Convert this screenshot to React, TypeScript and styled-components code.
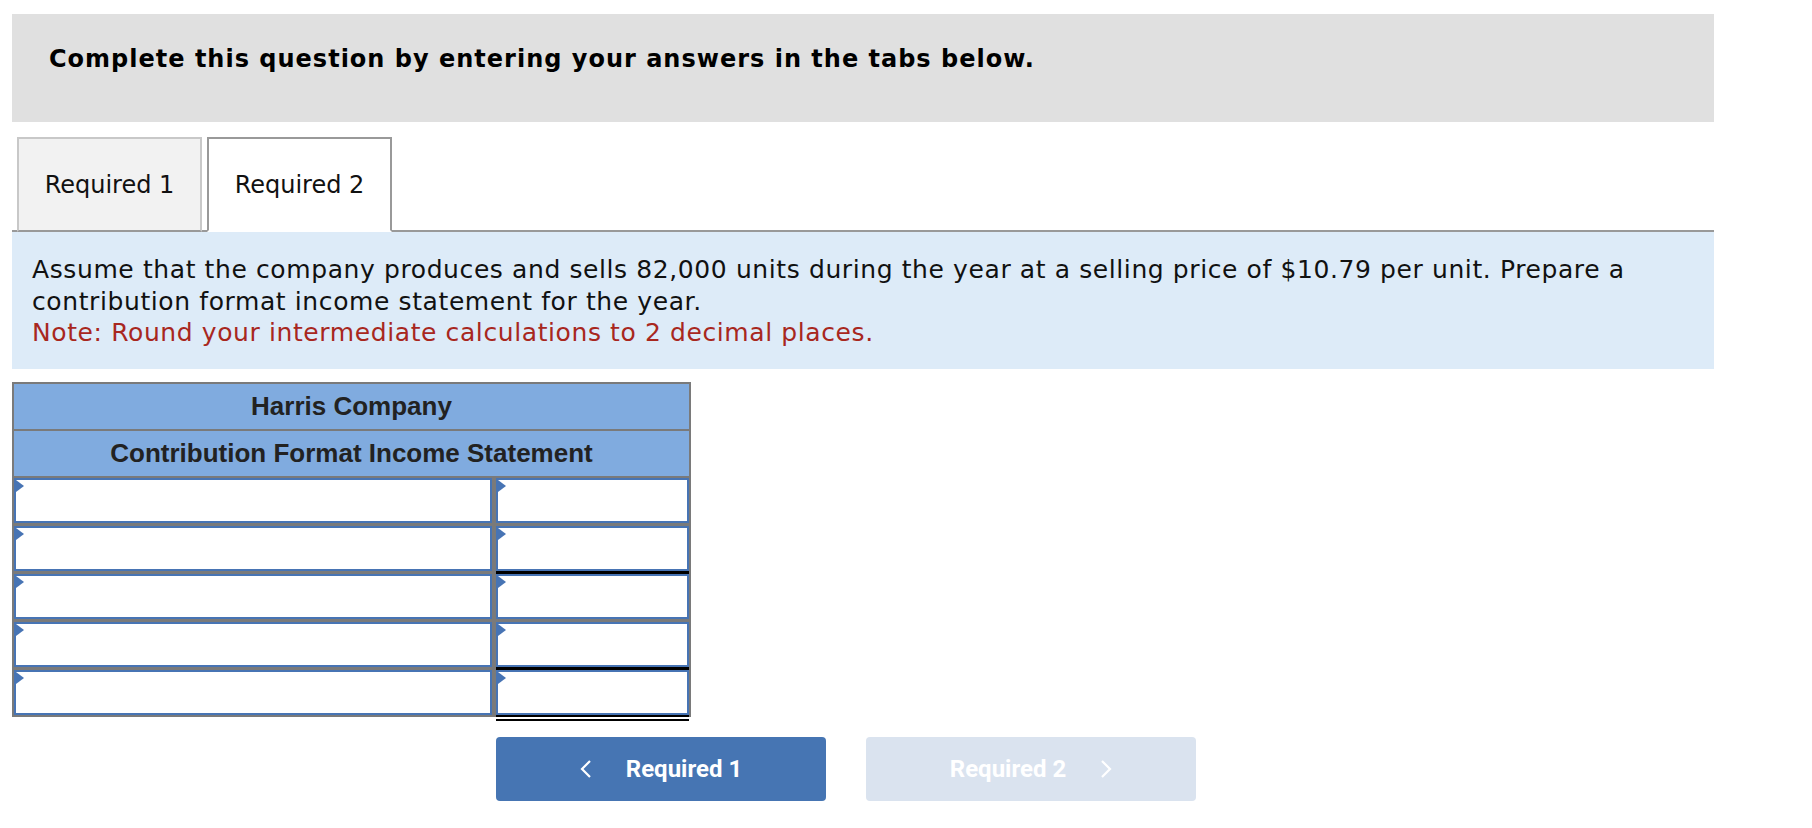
import styled, { createGlobalStyle } from "styled-components";

const GlobalStyle = createGlobalStyle`
  body {
    margin: 0;
    background: #ffffff;
    font-family: "DejaVu Sans", Verdana, sans-serif;
  }
`;

const Page = styled.div`
  padding: 14px 0 0 12px;
  width: 1702px;
`;

const Banner = styled.div`
  background: #e0e0e0;
  height: 108px;
  box-sizing: border-box;
  padding: 31px 37px 0;
`;

const BannerTitle = styled.h1`
  margin: 0;
  font-size: 24px;
  line-height: 28px;
  letter-spacing: 1px;
  font-weight: bold;
  color: #000;
`;

const TabBar = styled.div`
  display: flex;
  gap: 5px;
  margin-top: 15px;
  padding-left: 5px;
  border-bottom: 2px solid #999;
`;

const Tab = styled.div<{ $active?: boolean }>`
  width: 185px;
  height: 95px;
  box-sizing: border-box;
  display: flex;
  align-items: center;
  justify-content: center;
  font-size: 24px;
  color: #111;
  background: ${(p) => (p.$active ? "#ffffff" : "#f2f2f2")};
  border: 2px solid ${(p) => (p.$active ? "#999" : "#c8c8c8")};
  border-bottom: 2px solid ${(p) => (p.$active ? "#ffffff" : "#999")};
  margin-bottom: -2px;
`;

const Prompt = styled.div`
  background: #ddebf8;
  padding: 22px 20px 20px;
  font-size: 25px;
  letter-spacing: 0.6px;
  line-height: 31.5px;
  color: #111;
`;

const Note = styled.div`
  color: #a8271e;
`;

const Sheet = styled.div`
  margin-top: 13px;
  width: 679px;
  box-sizing: border-box;
  border: 2px solid #7a7a7a;
  background: #7a7a7a;
  display: flex;
  flex-direction: column;
  gap: 2px;
`;

const HeaderRow = styled.div`
  height: 45px;
  background: #80abdf;
  display: flex;
  align-items: center;
  justify-content: center;
  font-family: "Liberation Sans", Arial, sans-serif;
  font-weight: bold;
  font-size: 26px;
  color: #222;
`;

const Body = styled.div`
  display: grid;
  grid-template-columns: 1fr 193px;
  column-gap: 4px;
  row-gap: 3px;
`;

type Rule = "none" | "single" | "double";

const Field = styled.div<{ $rule?: Rule }>`
  position: relative;
  height: 45px;
  box-sizing: border-box;
  background: #fff;
  border: 2px solid #4774b4;
  box-shadow: ${(p) =>
    p.$rule === "single"
      ? "0 3px 0 #000"
      : p.$rule === "double"
      ? "0 2px 0 #000, 0 4px 0 #fff, 0 6px 0 #000"
      : "none"};

  &::before {
    content: "";
    position: absolute;
    left: 0;
    top: 0;
    border-top: 6px solid transparent;
    border-bottom: 6px solid transparent;
    border-left: 8px solid #4774b4;
  }
`;

const NavRow = styled.div`
  display: flex;
  gap: 40px;
  margin-top: 20px;
  padding-left: 484px;
`;

const NavButton = styled.button<{ $disabled?: boolean }>`
  width: 330px;
  height: 64px;
  border: none;
  border-radius: 4px;
  background: ${(p) => (p.$disabled ? "#dae3ef" : "#4675b3")};
  color: #fff;
  display: flex;
  align-items: center;
  justify-content: center;
  gap: 34px;
  font-family: Roboto, "Liberation Sans", Arial, sans-serif;
  font-weight: bold;
  font-size: 24px;
  cursor: ${(p) => (p.$disabled ? "default" : "pointer")};
`;

const Chevron = ({ dir }: { dir: "left" | "right" }) => (
  <svg width="12" height="18" viewBox="0 0 12 18">
    <polyline
      points={dir === "left" ? "10,1 2,9 10,17" : "2,1 10,9 2,17"}
      fill="none"
      stroke="#fff"
      strokeWidth="2.2"
    />
  </svg>
);

const rows: Rule[][] = [
  ["none", "none"],
  ["none", "single"],
  ["none", "none"],
  ["none", "single"],
  ["none", "double"],
];

const App = () => {
  return (
    <Page>
      <GlobalStyle />
      <Banner>
        <BannerTitle>Complete this question by entering your answers in the tabs below.</BannerTitle>
      </Banner>
      <TabBar>
        <Tab>Required 1</Tab>
        <Tab $active>Required 2</Tab>
      </TabBar>
      <Prompt>
        Assume that the company produces and sells 82,000 units during the year at a selling price of $10.79
        per unit. Prepare a contribution format income statement for the year.
        <Note>Note: Round your intermediate calculations to 2 decimal places.</Note>
      </Prompt>
      <Sheet>
        <HeaderRow>Harris Company</HeaderRow>
        <HeaderRow>Contribution Format Income Statement</HeaderRow>
        <Body>
          {rows.map((r, i) => [
            <Field key={`l${i}`} $rule={r[0]} />,
            <Field key={`r${i}`} $rule={r[1]} />,
          ])}
        </Body>
      </Sheet>
      <NavRow>
        <NavButton>
          <Chevron dir="left" />
          Required 1
        </NavButton>
        <NavButton $disabled>
          Required 2
          <Chevron dir="right" />
        </NavButton>
      </NavRow>
    </Page>
  );
};

export default App;
